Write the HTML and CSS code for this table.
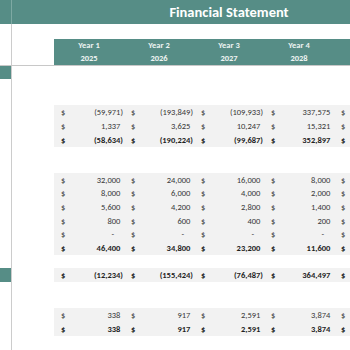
FILE: index.html
```html
<!DOCTYPE html>
<html>
<head>
<meta charset="utf-8">
<link rel="stylesheet" href="styles.css">
</head>
<body>
<div class="sheet">
  <div class="row title-row"><div class="side side-title"></div><div class="gutter"></div><div class="title">Financial Statement</div></div>
  <div class="row h15"><div class="side"></div></div>
  <div class="row h13"><div class="side"></div><div class="gutter"></div>
    <div class="cells head"><div class="hcell">Year 1</div><div class="hcell">Year 2</div><div class="hcell">Year 3</div><div class="hcell">Year 4</div><div class="hcell"></div></div></div>
  <div class="row h13 rule"><div class="side"></div><div class="gutter"></div>
    <div class="cells head"><div class="hcell">2025</div><div class="hcell">2026</div><div class="hcell">2027</div><div class="hcell">2028</div><div class="hcell"></div></div></div>
  <div class="row h13"><div class="side teal"></div></div>
  <div class="row h13"><div class="side"></div></div>
  <div class="row h13"><div class="side"></div></div>

  <div class="row h14"><div class="side"></div><div class="gutter"></div>
    <div class="cells shade"><div class="cell"><span>$</span><span class="neg">(59,971)</span></div><div class="cell"><span>$</span><span class="neg">(193,849)</span></div><div class="cell"><span>$</span><span class="neg">(109,933)</span></div><div class="cell"><span>$</span><span class="pos">337,575</span></div><div class="cell"><span>$</span></div></div></div>
  <div class="row h14"><div class="side"></div><div class="gutter"></div>
    <div class="cells shade"><div class="cell"><span>$</span><span class="pos">1,337</span></div><div class="cell"><span>$</span><span class="pos">3,625</span></div><div class="cell"><span>$</span><span class="pos">10,247</span></div><div class="cell"><span>$</span><span class="pos">15,321</span></div><div class="cell"><span>$</span></div></div></div>
  <div class="row h14 bold"><div class="side"></div><div class="gutter"></div>
    <div class="cells shade"><div class="cell"><span>$</span><span class="neg">(58,634)</span></div><div class="cell"><span>$</span><span class="neg">(190,224)</span></div><div class="cell"><span>$</span><span class="neg">(99,687)</span></div><div class="cell"><span>$</span><span class="pos">352,897</span></div><div class="cell"><span>$</span></div></div></div>

  <div class="row h13"><div class="side"></div></div>
  <div class="row h13"><div class="side"></div></div>

  <div class="row h137"><div class="side"></div><div class="gutter"></div>
    <div class="cells shade"><div class="cell"><span>$</span><span class="pos">32,000</span></div><div class="cell"><span>$</span><span class="pos">24,000</span></div><div class="cell"><span>$</span><span class="pos">16,000</span></div><div class="cell"><span>$</span><span class="pos">8,000</span></div><div class="cell"><span>$</span></div></div></div>
  <div class="row h137"><div class="side"></div><div class="gutter"></div>
    <div class="cells shade"><div class="cell"><span>$</span><span class="pos">8,000</span></div><div class="cell"><span>$</span><span class="pos">6,000</span></div><div class="cell"><span>$</span><span class="pos">4,000</span></div><div class="cell"><span>$</span><span class="pos">2,000</span></div><div class="cell"><span>$</span></div></div></div>
  <div class="row h137"><div class="side"></div><div class="gutter"></div>
    <div class="cells shade"><div class="cell"><span>$</span><span class="pos">5,600</span></div><div class="cell"><span>$</span><span class="pos">4,200</span></div><div class="cell"><span>$</span><span class="pos">2,800</span></div><div class="cell"><span>$</span><span class="pos">1,400</span></div><div class="cell"><span>$</span></div></div></div>
  <div class="row h137"><div class="side"></div><div class="gutter"></div>
    <div class="cells shade"><div class="cell"><span>$</span><span class="pos">800</span></div><div class="cell"><span>$</span><span class="pos">600</span></div><div class="cell"><span>$</span><span class="pos">400</span></div><div class="cell"><span>$</span><span class="pos">200</span></div><div class="cell"><span>$</span></div></div></div>
  <div class="row h137"><div class="side"></div><div class="gutter"></div>
    <div class="cells shade"><div class="cell"><span>$</span><span class="dash">-</span></div><div class="cell"><span>$</span><span class="dash">-</span></div><div class="cell"><span>$</span><span class="dash">-</span></div><div class="cell"><span>$</span><span class="dash">-</span></div><div class="cell"><span>$</span></div></div></div>
  <div class="row h137 bold"><div class="side"></div><div class="gutter"></div>
    <div class="cells shade"><div class="cell"><span>$</span><span class="pos">46,400</span></div><div class="cell"><span>$</span><span class="pos">34,800</span></div><div class="cell"><span>$</span><span class="pos">23,200</span></div><div class="cell"><span>$</span><span class="pos">11,600</span></div><div class="cell"><span>$</span></div></div></div>

  <div class="row h13"><div class="side"></div></div>
  <div class="row h14 bold"><div class="side teal"></div><div class="gutter"></div>
    <div class="cells shade"><div class="cell"><span>$</span><span class="neg">(12,234)</span></div><div class="cell"><span>$</span><span class="neg">(155,424)</span></div><div class="cell"><span>$</span><span class="neg">(76,487)</span></div><div class="cell"><span>$</span><span class="pos">364,497</span></div><div class="cell"><span>$</span></div></div></div>

  <div class="row h13"><div class="side"></div></div>
  <div class="row h13"><div class="side"></div></div>

  <div class="row h14"><div class="side"></div><div class="gutter"></div>
    <div class="cells shade"><div class="cell"><span>$</span><span class="pos">338</span></div><div class="cell"><span>$</span><span class="pos">917</span></div><div class="cell"><span>$</span><span class="pos">2,591</span></div><div class="cell"><span>$</span><span class="pos">3,874</span></div><div class="cell"><span>$</span></div></div></div>
  <div class="row h14 bold"><div class="side"></div><div class="gutter"></div>
    <div class="cells shade"><div class="cell"><span>$</span><span class="pos">338</span></div><div class="cell"><span>$</span><span class="pos">917</span></div><div class="cell"><span>$</span><span class="pos">2,591</span></div><div class="cell"><span>$</span><span class="pos">3,874</span></div><div class="cell"><span>$</span></div></div></div>

  <div class="row h15"><div class="side"></div></div>
  <div class="row h15"><div class="side"></div></div>
</div>
</body>
</html>
```

FILE: styles.css
```css
html, body {
  margin: 0;
  padding: 0;
  overflow: hidden;
  background: #ffffff;
}
body {
  width: 350px;
  height: 350px;
  font-family: Carlito, Calibri, Lato, "Open Sans", sans-serif;
  font-size: 8.5px;
  color: #383838;
}
.sheet {
  width: 350px;
  overflow: hidden;
}
.row {
  display: flex;
  height: 13px;
  white-space: nowrap;
}
.h13 { height: 13px; }
.h14 { height: 14px; }
.h15 { height: 15px; }
.h137 { height: 13.67px; }
.side {
  width: 11px;
  flex: none;
  border-right: 1px solid #cccccc;
}
.side.teal { background: #568d86; }
.gutter {
  width: 42px;
  flex: none;
}
.title-row {
  height: 24px;
  background: #568d86;
}
.side-title { border-right-color: #7ea9a3; }
.title {
  width: 350px;
  flex: none;
  text-align: center;
  color: #ffffff;
  font-weight: 700;
  font-size: 14.5px;
  line-height: 24px;
}
.rule {
  border-bottom: 1px solid #c8c8c8;
}
.cells {
  display: flex;
  flex: none;
  width: 350px;
}
.cells.head { background: #568d86; }
.cells.shade { background: #f2f2f2; }
.hcell {
  width: 70px;
  flex: none;
  text-align: center;
  color: #eef4f3;
  font-weight: 700;
  font-size: 8.5px;
  line-height: 13px;
}
.cell {
  width: 70px;
  flex: none;
  box-sizing: border-box;
  padding: 0 1px 0 7px;
  display: flex;
  justify-content: space-between;
  align-items: center;
}
.bold { font-weight: 700; color: #1f1f1f; }
.pos::after {
  content: ")";
  visibility: hidden;
}
.dash { padding-right: 9px; }
```
